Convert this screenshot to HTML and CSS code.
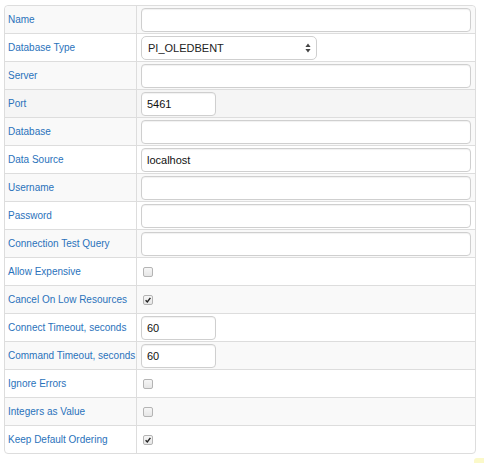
FILE: index.html
```html
<!DOCTYPE html>
<html>
<head>
<meta charset="utf-8">
<link rel="stylesheet" href="styles.css">
</head>
<body>
<table class="props">
  <tr class="odd"><td class="lbl">Name</td><td class="val"><input class="txt wide" type="text" value=""></td></tr>
  <tr><td class="lbl">Database Type</td><td class="val"><div class="sel"><span class="sel-text">PI_OLEDBENT</span><svg class="sel-arrows" width="6" height="10" viewBox="0 0 6 10"><path d="M3 0.5 L5.6 4 H0.4 Z M3 9.5 L5.6 6 H0.4 Z" fill="#444"/></svg></div></td></tr>
  <tr class="odd"><td class="lbl">Server</td><td class="val"><input class="txt wide" type="text" value=""></td></tr>
  <tr class="hover"><td class="lbl">Port</td><td class="val"><input class="txt short" type="text" value="5461"></td></tr>
  <tr class="odd"><td class="lbl">Database</td><td class="val"><input class="txt wide" type="text" value=""></td></tr>
  <tr><td class="lbl">Data Source</td><td class="val"><input class="txt wide" type="text" value="localhost"></td></tr>
  <tr class="odd"><td class="lbl">Username</td><td class="val"><input class="txt wide" type="text" value=""></td></tr>
  <tr><td class="lbl">Password</td><td class="val"><input class="txt wide" type="text" value=""></td></tr>
  <tr class="odd"><td class="lbl">Connection Test Query</td><td class="val"><input class="txt wide" type="text" value=""></td></tr>
  <tr><td class="lbl">Allow Expensive</td><td class="val"><span class="cb"></span></td></tr>
  <tr class="odd"><td class="lbl">Cancel On Low Resources</td><td class="val"><span class="cb"><svg width="10" height="10" viewBox="0 0 10 10"><path d="M2.6 5.3 L4.3 7 L7.4 2.8" fill="none" stroke="#222" stroke-width="1.4"/></svg></span></td></tr>
  <tr><td class="lbl">Connect Timeout, seconds</td><td class="val"><input class="txt short" type="text" value="60"></td></tr>
  <tr class="odd"><td class="lbl">Command Timeout, seconds</td><td class="val"><input class="txt short" type="text" value="60"></td></tr>
  <tr><td class="lbl">Ignore Errors</td><td class="val"><span class="cb"></span></td></tr>
  <tr class="odd"><td class="lbl">Integers as Value</td><td class="val"><span class="cb"></span></td></tr>
  <tr><td class="lbl">Keep Default Ordering</td><td class="val"><span class="cb"><svg width="10" height="10" viewBox="0 0 10 10"><path d="M2.6 5.3 L4.3 7 L7.4 2.8" fill="none" stroke="#222" stroke-width="1.4"/></svg></span></td></tr>
</table>
<div class="note"></div>
</body>
</html>
```
FILE: styles.css
```css
html, body {
  margin: 0;
  padding: 0;
  background: #fff;
}
body {
  padding: 5px 0 0 4px;
  font-family: "Liberation Sans", Arial, Helvetica, sans-serif;
  position: relative;
  height: 458px;
  overflow: hidden;
}
.props {
  width: 472px;
  border-collapse: separate;
  border-spacing: 0;
  border: 1px solid #ddd;
  border-radius: 4px;
  table-layout: fixed;
}
.props td {
  height: 28px;
  padding: 0;
  vertical-align: middle;
  border-top: 1px solid #ddd;
  box-sizing: border-box;
}
.props tr:first-child td {
  border-top: none;
  height: 27px;
}
.props tr.odd td {
  background: #f9f9f9;
}
.props tr.hover td {
  background: #f5f5f5;
}
.props tr:first-child td.lbl { border-top-left-radius: 4px; }
.props tr:first-child td.val { border-top-right-radius: 4px; }
.props tr:last-child td.lbl { border-bottom-left-radius: 4px; }
.props tr:last-child td.val { border-bottom-right-radius: 4px; }
.lbl {
  width: 132px;
  border-right: 1px solid #ddd;
  padding-left: 3px !important;
  font-size: 10px;
  color: #2a72bb;
  white-space: nowrap;
}
.val {
  padding-left: 4px !important;
}
.txt {
  display: block;
  box-sizing: border-box;
  height: 24px;
  margin: 0;
  padding: 0 5px;
  border: 1px solid #cfcfcf;
  border-radius: 4px;
  background: #fff;
  box-shadow: inset 0 1px 1px rgba(0,0,0,0.06);
  font-family: "Liberation Sans", Arial, Helvetica, sans-serif;
  font-size: 11px;
  color: #111;
  outline: none;
}
.txt.wide { width: 330px; }
.txt.short { width: 75px; }
.sel {
  position: relative;
  box-sizing: border-box;
  width: 176px;
  height: 24px;
  border: 1px solid #cfcfcf;
  border-radius: 5px;
  background: #fff;
  display: flex;
  align-items: center;
  padding-left: 6px;
  font-size: 11px;
  color: #222;
}
.sel-arrows {
  position: absolute;
  right: 5px;
  top: 6px;
}
.cb {
  display: block;
  box-sizing: border-box;
  width: 10px;
  height: 10px;
  margin-left: 2px;
  border: 1px solid #b4b4b4;
  border-radius: 2px;
  background: linear-gradient(#f6f6f6, #e6e6e6);
  position: relative;
}
.cb svg {
  position: absolute;
  left: -1px;
  top: -1px;
}
.note {
  position: absolute;
  left: 474px;
  top: 458px;
  width: 12px;
  height: 6px;
  background: #fbf9c9;
  border-radius: 3px 0 0 0;
}
```
